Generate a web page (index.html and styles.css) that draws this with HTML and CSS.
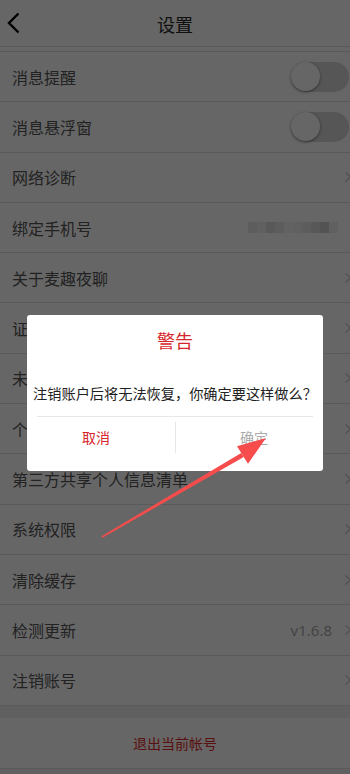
FILE: index.html
```html
<!DOCTYPE html>
<html lang="zh-CN">
<head>
<meta charset="utf-8">
<title>设置</title>
<link rel="stylesheet" href="styles.css">
</head>
<body>
<div class="page">
  <header class="topbar">
    <svg class="back" width="14" height="22" viewBox="0 0 14 22"><path d="M11.5 1.5 L2 11 L11.5 20.5" fill="none" stroke="#000" stroke-width="2.4"/></svg>
    <h1 class="title">设置</h1>
  </header>
  <div class="band"></div>
  <ul class="list">
    <li class="row"><span class="label">消息提醒</span><span class="switch"><span class="knob"></span></span></li>
    <li class="row"><span class="label">消息悬浮窗</span><span class="switch"><span class="knob"></span></span></li>
    <li class="row"><span class="label">网络诊断</span><svg class="chev" width="8" height="12" viewBox="0 0 8 12"><path d="M1.5 1.5 L6.5 6 L1.5 10.5" fill="none" stroke="#c4c4c4" stroke-width="1.2"/></svg></li>
    <li class="row"><span class="label">绑定手机号</span><span class="blur"><i class="p1"></i><i class="p2"></i><i class="p3"></i><i class="p1"></i><i class="p4"></i><i class="p2"></i><i class="p1"></i><i class="p3"></i><i class="p5"></i><i class="p2"></i></span></li>
    <li class="row"><span class="label">关于麦趣夜聊</span><svg class="chev" width="8" height="12" viewBox="0 0 8 12"><path d="M1.5 1.5 L6.5 6 L1.5 10.5" fill="none" stroke="#c4c4c4" stroke-width="1.2"/></svg></li>
    <li class="row"><span class="label">证照信息</span><svg class="chev" width="8" height="12" viewBox="0 0 8 12"><path d="M1.5 1.5 L6.5 6 L1.5 10.5" fill="none" stroke="#c4c4c4" stroke-width="1.2"/></svg></li>
    <li class="row"><span class="label">未成年人模式</span><svg class="chev" width="8" height="12" viewBox="0 0 8 12"><path d="M1.5 1.5 L6.5 6 L1.5 10.5" fill="none" stroke="#c4c4c4" stroke-width="1.2"/></svg></li>
    <li class="row"><span class="label">个人信息收集清单</span><svg class="chev" width="8" height="12" viewBox="0 0 8 12"><path d="M1.5 1.5 L6.5 6 L1.5 10.5" fill="none" stroke="#c4c4c4" stroke-width="1.2"/></svg></li>
    <li class="row"><span class="label">第三方共享个人信息清单</span><svg class="chev" width="8" height="12" viewBox="0 0 8 12"><path d="M1.5 1.5 L6.5 6 L1.5 10.5" fill="none" stroke="#c4c4c4" stroke-width="1.2"/></svg></li>
    <li class="row"><span class="label">系统权限</span><svg class="chev" width="8" height="12" viewBox="0 0 8 12"><path d="M1.5 1.5 L6.5 6 L1.5 10.5" fill="none" stroke="#c4c4c4" stroke-width="1.2"/></svg></li>
    <li class="row"><span class="label">清除缓存</span><svg class="chev" width="8" height="12" viewBox="0 0 8 12"><path d="M1.5 1.5 L6.5 6 L1.5 10.5" fill="none" stroke="#c4c4c4" stroke-width="1.2"/></svg></li>
    <li class="row"><span class="label">检测更新</span><span class="value">v1.6.8</span><svg class="chev" width="8" height="12" viewBox="0 0 8 12"><path d="M1.5 1.5 L6.5 6 L1.5 10.5" fill="none" stroke="#c4c4c4" stroke-width="1.2"/></svg></li>
    <li class="row"><span class="label">注销账号</span><svg class="chev" width="8" height="12" viewBox="0 0 8 12"><path d="M1.5 1.5 L6.5 6 L1.5 10.5" fill="none" stroke="#c4c4c4" stroke-width="1.2"/></svg></li>
  </ul>
  <div class="logout">退出当前帐号</div>
</div>

<div class="mask">
  <div class="dialog">
    <div class="d-title">警告</div>
    <div class="d-msg">注销账户后将无法恢复，你确定要这样做么？</div>
    <div class="d-actions">
      <span class="btn cancel">取消</span>
      <span class="vsep"></span>
      <span class="btn ok">确定</span>
    </div>
  </div>
  <svg class="arrow" width="350" height="774" viewBox="0 0 350 774">
    <polygon points="101.6,536.3 241.2,452.9 243.8,457.1 102.4,537.7" fill="#f64c4c"/>
    <polygon points="266,438 237,446.2 248,463.8" fill="#f64c4c"/>
  </svg>
</div>
</body>
</html>
```

FILE: styles.css
```css
* { box-sizing: border-box; margin: 0; padding: 0; }
html, body { width: 350px; height: 774px; overflow: hidden; }
body {
  background: #efefef;
  font-family: "Noto Sans CJK SC", "Noto Sans", sans-serif;
  color: #555;
}
.page { width: 350px; }
.topbar {
  height: 47px;
  background: #fff;
  border-bottom: 1px solid #e1e1e1;
  display: flex;
  align-items: center;
  justify-content: center;
  position: relative;
}
.back { position: absolute; left: 7px; top: 12px; }
.title { font-size: 18px; font-weight: 400; color: #2a2a2a; line-height: 1; margin-top: 1px; }
.band { height: 4px; background: #fff; }
.list { list-style: none; background: #fff; border-top: 1px solid #e1e1e1; }
.row {
  height: 50.3px;
  border-bottom: 1px solid #e1e1e1;
  display: flex;
  align-items: center;
  padding-left: 12px;
}
.label { flex: 1; font-size: 16px; color: #555; line-height: 1; }
.chev { margin-right: -2px; margin-left: 4px; flex: none; }
.value { font-family: "Noto Sans", sans-serif; font-size: 15px; color: #aaa; margin-right: 8px; }
.switch {
  width: 58px; height: 30px; border-radius: 15px;
  background: #d6d6d6;
  margin-right: 1px;
  position: relative;
  flex: none;
}
.knob {
  position: absolute; left: 0; top: 0.5px;
  width: 29px; height: 29px; border-radius: 50%;
  background: #fff;
  box-shadow: 0 1px 3px rgba(0,0,0,0.45);
}
.blur { display: flex; margin-right: 12px; }
.blur i { display: block; width: 9px; height: 11px; }
.p1 { background: #e8e8e8; }
.p2 { background: #f0f0f0; }
.p3 { background: #dcdcdc; }
.p4 { background: #f6f6f6; }
.p5 { background: #cfcfcf; }
.logout {
  margin-top: 12px;
  height: 51px;
  background: #fff;
  border-bottom: 1px solid #e1e1e1;
  display: flex; align-items: center; justify-content: center;
  font-size: 14px; color: #e02a2a;
}
.mask {
  position: fixed; inset: 0;
  background: rgba(0,0,0,0.6);
}
.dialog {
  position: absolute; left: 27px; top: 315px;
  width: 296px; height: 156px;
  background: #fff; border-radius: 3px;
  display: flex; flex-direction: column; align-items: center;
}
.d-title { margin-top: 15px; font-size: 18px; color: #d6262b; line-height: 20px; }
.d-msg { margin-top: 33px; font-size: 14.2px; color: #222; line-height: 20px; white-space: nowrap; }
.d-actions {
  margin-top: 13px;
  width: 276px;
  border-top: 1px solid #e6e6e6;
  display: flex; align-items: center; justify-content: space-between;
  padding-top: 4px;
}
.btn { width: 118px; text-align: center; font-size: 14px; line-height: 32px; }
.cancel { color: #d6262b; }
.ok { color: #aaa; }
.vsep { width: 1px; height: 31px; background: #e6e6e6; }
.arrow { position: absolute; left: 0; top: 0; }
```
